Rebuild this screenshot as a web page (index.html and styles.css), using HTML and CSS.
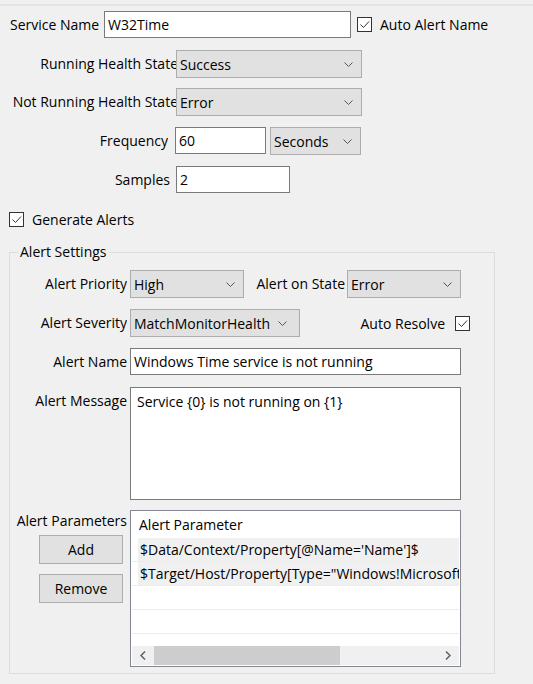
FILE: index.html
```html
<!DOCTYPE html>
<html lang="en">
<head>
    <meta charset="UTF-8">
    <title>Service Monitor</title>
    <link rel="stylesheet" href="styles.css">
</head>
<body>
    <div class="top-rule"></div>

    <div class="settings">
        <div class="row">
            <span class="lbl lbl-service">Service Name</span>
            <div class="textbox tb-service">W32Time</div>
            <span class="check check-auto-name">
                <svg class="box" width="15" height="15" viewBox="0 0 15 15"><rect x="0.5" y="0.5" width="14" height="14" fill="#fff" stroke="#333"/><polyline points="3.5,7.5 6.5,10.5 12,4.5" fill="none" stroke="#333"/></svg>
                Auto Alert Name
            </span>
        </div>

        <div class="row">
            <span class="lbl lbl-state">Running Health State</span>
            <div class="combo cb-state">Success
                <svg class="chev" width="9" height="5" viewBox="0 0 9 5"><polyline points="0.5,0.5 4.5,4.5 8.5,0.5" fill="none" stroke="#555"/></svg>
            </div>
        </div>

        <div class="row row-tight">
            <span class="lbl lbl-state">Not Running Health State</span>
            <div class="combo cb-state">Error
                <svg class="chev" width="9" height="5" viewBox="0 0 9 5"><polyline points="0.5,0.5 4.5,4.5 8.5,0.5" fill="none" stroke="#555"/></svg>
            </div>
        </div>

        <div class="row">
            <span class="lbl lbl-freq">Frequency</span>
            <div class="textbox tb-freq">60</div>
            <div class="combo cb-unit">Seconds
                <svg class="chev" width="9" height="5" viewBox="0 0 9 5"><polyline points="0.5,0.5 4.5,4.5 8.5,0.5" fill="none" stroke="#555"/></svg>
            </div>
        </div>

        <div class="row">
            <span class="lbl lbl-samples">Samples</span>
            <div class="textbox tb-samples">2</div>
        </div>

        <div class="row">
            <span class="check check-generate">
                <svg class="box" width="15" height="15" viewBox="0 0 15 15"><rect x="0.5" y="0.5" width="14" height="14" fill="#fff" stroke="#333"/><polyline points="3.5,7.5 6.5,10.5 12,4.5" fill="none" stroke="#333"/></svg>
                Generate Alerts
            </span>
        </div>
    </div>

    <fieldset class="group">
        <legend class="group-title">Alert Settings</legend>

        <div class="row">
            <span class="lbl lbl-alert">Alert Priority</span>
            <div class="combo cb-priority">High
                <svg class="chev" width="9" height="5" viewBox="0 0 9 5"><polyline points="0.5,0.5 4.5,4.5 8.5,0.5" fill="none" stroke="#555"/></svg>
            </div>
            <span class="lbl lbl-onstate">Alert on State</span>
            <div class="combo cb-priority">Error
                <svg class="chev" width="9" height="5" viewBox="0 0 9 5"><polyline points="0.5,0.5 4.5,4.5 8.5,0.5" fill="none" stroke="#555"/></svg>
            </div>
        </div>

        <div class="row">
            <span class="lbl lbl-alert">Alert Severity</span>
            <div class="combo cb-severity">MatchMonitorHealth
                <svg class="chev" width="9" height="5" viewBox="0 0 9 5"><polyline points="0.5,0.5 4.5,4.5 8.5,0.5" fill="none" stroke="#555"/></svg>
            </div>
            <span class="check check-resolve">
                Auto Resolve
                <svg class="box" width="15" height="15" viewBox="0 0 15 15"><rect x="0.5" y="0.5" width="14" height="14" fill="#fff" stroke="#333"/><polyline points="3.5,7.5 6.5,10.5 12,4.5" fill="none" stroke="#333"/></svg>
            </span>
        </div>

        <div class="row">
            <span class="lbl lbl-alert">Alert Name</span>
            <div class="textbox tb-wide">Windows Time service is not running</div>
        </div>

        <div class="row row-top">
            <span class="lbl lbl-alert">Alert Message</span>
            <div class="textarea">Service {0} is not running on {1}</div>
        </div>

        <div class="row row-top row-tight">
            <div class="param-side">
                <span class="lbl lbl-params">Alert Parameters</span>
                <button class="btn">Add</button>
                <button class="btn">Remove</button>
            </div>
            <div class="listbox">
                <div class="list-head">Alert Parameter</div>
                <div class="list-rows">
                    <div class="list-row"><span class="cell">$Data/Context/Property[@Name='Name']$</span></div>
                    <div class="list-row"><span class="cell">$Target/Host/Property[Type="Windows!Microsoft.Windows.Computer"]/NetworkName$</span></div>
                    <div class="list-row"></div>
                    <div class="list-row"></div>
                    <div class="list-row"></div>
                </div>
                <div class="hscroll">
                    <svg class="arrow" width="6" height="9" viewBox="0 0 6 9"><polyline points="5,0.5 1,4.5 5,8.5" fill="none" stroke="#606060" stroke-width="1.5"/></svg>
                    <div class="track"><div class="thumb"></div></div>
                    <svg class="arrow" width="6" height="9" viewBox="0 0 6 9"><polyline points="1,0.5 5,4.5 1,8.5" fill="none" stroke="#606060" stroke-width="1.5"/></svg>
                </div>
            </div>
        </div>
    </fieldset>
</body>
</html>
```

FILE: styles.css
```css
body {
    margin: 0;
    background: #f0f0f0;
    font-family: 'Open Sans', 'Noto Sans', sans-serif;
    font-size: 14px;
    color: #000;
}

.top-rule {
    margin-top: 4px;
    border-top: 2px solid #e3e3e3;
}

.settings {
    display: flex;
    flex-direction: column;
    gap: 11px;
    padding-top: 5px;
}

.row {
    display: flex;
    align-items: flex-start;
    height: 28px;
}

.row-tight {
    margin-top: -1px;
}

.row-top {
    height: auto;
}

.lbl {
    line-height: 27px;
    white-space: nowrap;
    overflow: hidden;
    flex-shrink: 0;
}

.lbl-service {
    width: 94px;
    padding-left: 10px;
}

.lbl-state {
    width: 168px;
    padding-left: 10px;
    text-align: right;
    margin-right: -2px;
}

.lbl-freq {
    width: 168px;
    text-align: right;
    margin-right: 7px;
}

.lbl-samples {
    width: 170px;
    text-align: right;
    margin-right: 6px;
}

.textbox {
    box-sizing: border-box;
    height: 27px;
    line-height: 25px;
    padding: 0 3px;
    background: #fff;
    border: 1px solid #7a7a7a;
    white-space: nowrap;
    overflow: hidden;
}

.tb-service { width: 247px; }
.tb-freq { width: 91px; }
.tb-samples { width: 114px; }
.tb-wide { width: 331px; }

.combo {
    box-sizing: border-box;
    display: flex;
    align-items: center;
    justify-content: space-between;
    height: 28px;
    padding: 0 8px 0 3px;
    background: #e1e1e1;
    border: 1px solid #adadad;
    white-space: nowrap;
    flex-shrink: 0;
}

.cb-state { width: 186px; }
.cb-unit { width: 91px; margin-left: 4px; }
.cb-priority { width: 114px; }
.cb-severity { width: 170px; padding-right: 12px; }

.chev {
    flex-shrink: 0;
}

.check {
    display: flex;
    align-items: center;
    gap: 8px;
    height: 27px;
    white-space: nowrap;
}

.check-auto-name {
    margin-left: 6px;
}

.check-generate {
    padding-left: 9px;
    margin-top: 1px;
}

.check-resolve {
    margin-left: auto;
    margin-right: 24px;
    gap: 10px;
    height: 28px;
}

/* alert settings group */

.group {
    margin: 9px 0 0 9px;
    width: 486px;
    box-sizing: border-box;
    padding: 8px 0 6px 0;
    border: 1px solid #dcdcdc;
    display: flex;
    flex-direction: column;
    gap: 11px;
}

.group-title {
    margin-left: 8px;
    padding: 0 2px;
    line-height: 20px;
}

.lbl-alert {
    width: 117px;
    text-align: right;
    margin-right: 3px;
}

.lbl-onstate {
    width: 101px;
    text-align: right;
    margin-right: 2px;
}

.textarea {
    box-sizing: border-box;
    width: 331px;
    height: 113px;
    padding: 4px 6px;
    line-height: 20px;
    background: #fff;
    border: 1px solid #7a7a7a;
}

.param-side {
    width: 120px;
    display: flex;
    flex-direction: column;
    align-items: flex-start;
}

.lbl-params {
    line-height: 22px;
    width: 117px;
    text-align: right;
}

.btn {
    box-sizing: border-box;
    width: 84px;
    height: 29px;
    margin: 3px 0 7px 29px;
    padding: 0;
    font: inherit;
    color: #000;
    background: #e1e1e1;
    border: 1px solid #adadad;
}

.listbox {
    box-sizing: border-box;
    width: 331px;
    height: 157px;
    padding: 1px;
    background: #fff;
    border: 1px solid #828790;
    display: flex;
    flex-direction: column;
    overflow: hidden;
}

.list-head {
    height: 26px;
    line-height: 26px;
    padding-left: 7px;
    flex-shrink: 0;
}

.list-rows {
    flex: 1;
    overflow: hidden;
}

.list-row {
    box-sizing: border-box;
    height: 24px;
    border-bottom: 1px solid #ececec;
    white-space: nowrap;
    overflow: hidden;
}

.cell {
    display: block;
    margin-left: 6px;
    padding-left: 2px;
    line-height: 23px;
    background: #f0f0f0;
}

.hscroll {
    height: 19px;
    flex-shrink: 0;
    display: flex;
    align-items: center;
    background: #f0f0f0;
}

.hscroll .arrow {
    flex-shrink: 0;
    margin: 0 8px;
}

.track {
    flex: 1;
    height: 100%;
}

.thumb {
    width: 186px;
    height: 100%;
    background: #cdcdcd;
}
```
